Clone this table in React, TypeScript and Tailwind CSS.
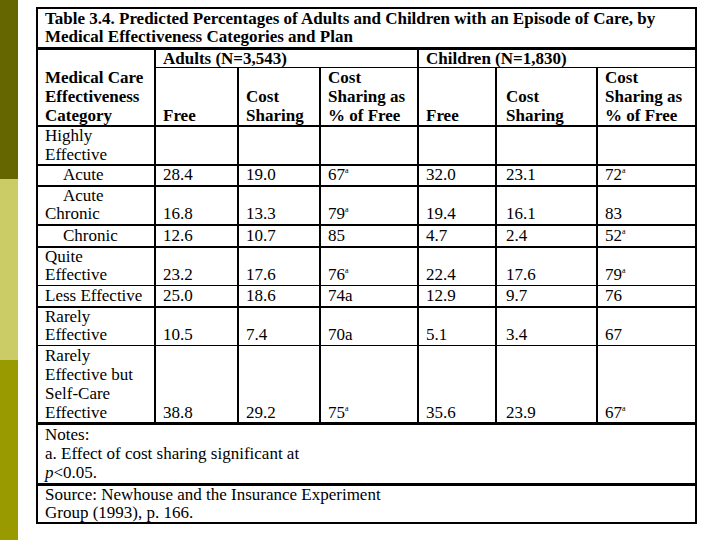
const serif = { fontFamily: '"Liberation Serif", "Times New Roman", serif' };

type Row = {
  label: React.ReactNode;
  values: React.ReactNode[];
  top: string;
  lead?: string;
};

const A = ({ n }: { n: string }) => (
  <>
    {n}
    <sup className="-top-[7px] text-[8px]">a</sup>
  </>
);

const ROWS: Row[] = [
  {
    label: (
      <>
        Highly
        <br />
        Effective
      </>
    ),
    values: ['', '', '', '', '', ''],
    top: 'border-t-2',
  },
  {
    label: <span className="pl-[18px]">Acute</span>,
    values: ['28.4', '19.0', <A n="67" />, '32.0', '23.1', <A n="72" />],
    top: 'border-t-2',
  },
  {
    label: (
      <>
        <span className="pl-[18px]">Acute</span>
        <br />
        Chronic
      </>
    ),
    values: ['16.8', '13.3', <A n="79" />, '19.4', '16.1', '83'],
    top: 'border-t-2',
  },
  {
    label: <span className="pl-[18px]">Chronic</span>,
    values: ['12.6', '10.7', '85', '4.7', '2.4', <A n="52" />],
    top: 'border-t-2',
    lead: 'leading-[20px]',
  },
  {
    label: (
      <>
        Quite
        <br />
        Effective
      </>
    ),
    values: ['23.2', '17.6', <A n="76" />, '22.4', '17.6', <A n="79" />],
    top: 'border-t-2',
  },
  {
    label: 'Less Effective',
    values: ['25.0', '18.6', '74a', '12.9', '9.7', '76'],
    top: 'border-t',
    lead: 'leading-[20px]',
  },
  {
    label: (
      <>
        Rarely
        <br />
        Effective
      </>
    ),
    values: ['10.5', '7.4', '70a', '5.1', '3.4', '67'],
    top: 'border-t-2',
  },
  {
    label: (
      <>
        Rarely
        <br />
        Effective but
        <br />
        Self-Care
        <br />
        Effective
      </>
    ),
    values: ['38.8', '29.2', <A n="75" />, '35.6', '23.9', <A n="67" />],
    top: 'border-t',
    lead: 'leading-[19px]',
  },
];

export default function App() {
  return (
    <div className="flex w-[720px] h-[540px] bg-white overflow-hidden" style={serif}>
      <div className="flex flex-col w-[18px] shrink-0">
        <div className="h-[179px] bg-[#666600]" />
        <div className="h-[181px] bg-[#cccc66]" />
        <div className="h-[180px] bg-[#999900]" />
      </div>
      <div className="pl-[18px] pt-[7px]">
        <table className="table-fixed border-collapse w-[659px] text-[17px] leading-[19px] text-black">
          <colgroup>
            <col className="w-[118px]" />
            <col className="w-[83px]" />
            <col className="w-[82px]" />
            <col className="w-[98px]" />
            <col className="w-[78px]" />
            <col className="w-[101px]" />
            <col className="w-[99px]" />
          </colgroup>
          <tbody>
            <tr>
              <td
                colSpan={7}
                className="border-2 border-b-[3px] border-black px-[7px] pt-[1px] pb-[1px] align-top font-bold leading-[18px]"
              >
                Table 3.4. Predicted Percentages of Adults and Children with an Episode of Care, by
                <br />
                Medical Effectiveness Categories and Plan
              </td>
            </tr>
            <tr>
              <td rowSpan={2} className="border-2 border-black px-[7px] align-bottom font-bold">
                Medical Care
                <br />
                Effectiveness
                <br />
                Category
              </td>
              <td colSpan={3} className="border-2 border-b border-black px-[7px] align-bottom font-bold leading-[17px]">
                Adults (N=3,543)
              </td>
              <td colSpan={3} className="border-2 border-b border-black px-[7px] align-bottom font-bold leading-[17px]">
                Children (N=1,830)
              </td>
            </tr>
            <tr className="font-bold">
              <td className="border-2 border-t border-black px-[7px] align-bottom">Free</td>
              <td className="border-2 border-t border-black px-[7px] align-bottom">
                Cost
                <br />
                Sharing
              </td>
              <td className="border-2 border-t border-black px-[7px] align-bottom">
                Cost
                <br />
                Sharing as
                <br />% of Free
              </td>
              <td className="border-2 border-t border-black px-[7px] align-bottom">Free</td>
              <td className="border-2 border-t border-black px-[9px] align-bottom">
                Cost
                <br />
                Sharing
              </td>
              <td className="border-2 border-t border-black px-[7px] align-bottom">
                Cost
                <br />
                Sharing as
                <br />% of Free
              </td>
            </tr>
            {ROWS.map((r, i) => (
              <tr key={i} className={r.lead ?? 'leading-[18.5px]'}>
                <td className={`${r.top} border-x-2 border-black px-[7px] align-bottom`}>{r.label}</td>
                {r.values.map((v, j) => (
                  <td
                    key={j}
                    className={`${r.top} border-x-2 border-black ${j === 4 ? 'px-[9px]' : 'px-[7px]'} align-bottom`}
                  >
                    {v}
                  </td>
                ))}
              </tr>
            ))}
            <tr>
              <td colSpan={7} className="border-2 border-t-[3px] border-black px-[7px] pb-[1px] align-top">
                Notes:
                <br />
                a. Effect of cost sharing significant at
                <br />
                <i>p</i>&lt;0.05.
              </td>
            </tr>
            <tr>
              <td colSpan={7} className="border-2 border-t-[3px] border-black px-[7px] align-top leading-[18px]">
                Source: Newhouse and the Insurance Experiment
                <br />
                Group (1993), p. 166.
              </td>
            </tr>
          </tbody>
        </table>
      </div>
    </div>
  );
}
